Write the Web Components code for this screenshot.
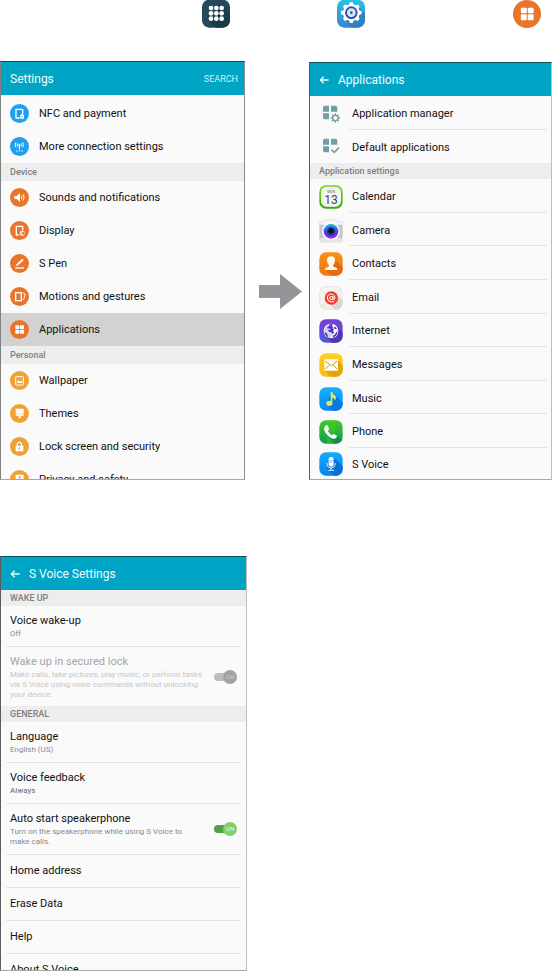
<!DOCTYPE html>
<html lang="en">
<head>
<meta charset="utf-8">
<meta name="viewport" content="width=device-width, initial-scale=1">
<title>S Voice settings</title>
<style>
  body {
    margin: 0;
    background: #fff;
    font-family: Roboto, "Liberation Sans", sans-serif;
    color: #111;
  }
  .path {
    display: grid;
    grid-template-columns: 202fr 135fr 176fr 39fr;
    margin-bottom: 33px;
  }
  .path ui-icon:first-child { grid-column: 2; }
  .steps {
    display: grid;
    grid-template-columns: 245fr 64px 243fr;
    align-items: end;
    margin-bottom: 76px;
  }
  .steps.single {
    grid-template-columns: 247fr 305fr;
    margin-bottom: 0;
  }
  .next {
    align-self: center;
    justify-self: end;
    padding: 41px 7px 0 0;
  }
  .first { --ratio: 245 / 419; --left: #808080; --right: #8c8c8c; }
  .second { --ratio: 243 / 418; }
  .third { --ratio: 247 / 415; }
</style>
</head>
<body>

<nav class="path" aria-label="Path">
  <ui-icon name="apps" size="28"></ui-icon>
  <ui-icon name="settings" size="28"></ui-icon>
  <ui-icon name="applications" size="28"></ui-icon>
</nav>

<main>
  <div class="steps">
    <phone-screen class="first">
      <screen-header>Settings<button-text slot="action">SEARCH</button-text></screen-header>
      <menu-list>
        <menu-item icon="nfc">NFC and payment</menu-item>
        <menu-item icon="connection">More connection settings</menu-item>
        <section-label>Device</section-label>
        <menu-item icon="sound">Sounds and notifications</menu-item>
        <menu-item icon="display">Display</menu-item>
        <menu-item icon="pen">S Pen</menu-item>
        <menu-item icon="motion">Motions and gestures</menu-item>
        <menu-item icon="applications" selected>Applications</menu-item>
        <section-label>Personal</section-label>
        <menu-item icon="wallpaper">Wallpaper</menu-item>
        <menu-item icon="themes">Themes</menu-item>
        <menu-item icon="lock">Lock screen and security</menu-item>
        <menu-item icon="privacy">Privacy and safety</menu-item>
      </menu-list>
    </phone-screen>

    <ui-icon class="next" name="next" size="43"></ui-icon>

    <phone-screen class="second">
      <screen-header back>Applications</screen-header>
      <app-item icon="manager" divider>Application manager</app-item>
      <app-item icon="defaults">Default applications</app-item>
      <section-label compact>Application settings</section-label>
      <app-item icon="calendar" divider>Calendar</app-item>
      <app-item icon="camera" divider>Camera</app-item>
      <app-item icon="contacts" divider>Contacts</app-item>
      <app-item icon="email" divider>Email</app-item>
      <app-item icon="internet" divider>Internet</app-item>
      <app-item icon="messages" divider>Messages</app-item>
      <app-item icon="music" divider>Music</app-item>
      <app-item icon="phone" divider>Phone</app-item>
      <app-item icon="voice">S Voice</app-item>
    </phone-screen>
  </div>

  <div class="steps single">
    <phone-screen class="third">
      <screen-header back>S Voice Settings</screen-header>
      <section-label compact>WAKE UP</section-label>
      <option-item divider>Voice wake-up<span slot="detail">Off</span></option-item>
      <option-item toggle disabled>Wake up in secured lock<span slot="detail">Make calls, take pictures, play music, or perform tasks<br>via S Voice using voice commands without unlocking<br>your device.</span></option-item>
      <section-label compact>GENERAL</section-label>
      <option-item divider>Language<span slot="detail">English (US)</span></option-item>
      <option-item divider dark>Voice feedback<span slot="detail">Always</span></option-item>
      <option-item divider toggle>Auto start speakerphone<span slot="detail">Turn on the speakerphone while using S Voice to<br>make calls.</span></option-item>
      <option-item divider plain>Home address</option-item>
      <option-item divider plain>Erase Data</option-item>
      <option-item divider plain>Help</option-item>
      <option-item plain>About S Voice</option-item>
    </phone-screen>
  </div>
</main>

<script>
const BLUE = '#1f9fee'
const ORANGE = '#e9752a'
const AMBER = '#eea236'

// round badges are drawn on a 57 unit grid
const badge = (color, body) => ({
  box: '0 0 57 57',
  body: `<circle cx="28.500" cy="28.500" r="28.500" fill="${color}"/>${body}`
})

// launcher icons are drawn on a 72 unit grid
const tile = (id, from, to, body) => ({
  box: '0 0 72 72',
  body: `
    <defs>
      <linearGradient id="${id}" x1="0" y1="0" x2="0" y2="1">
        <stop offset="0" stop-color="${from}"/><stop offset="1" stop-color="${to}"/>
      </linearGradient>
      <clipPath id="${id}-clip"><rect x="1" y="1" width="70" height="70" rx="20"/></clipPath>
    </defs>
    <g clip-path="url(#${id}-clip)"><rect width="72" height="72" fill="url(#${id})"/>${body}</g>`
})

const squares = `<g fill="#719fa9">
  <path d="M17 11h13v18H12V17q0-6 5-6zM36 11h13q6 0 6 6v12H36zM12 34h18v18H17q-5 0-5-6z"/></g>`

const ICONS = {
  apps: {
    box: '0 0 84 84',
    body: `<defs><clipPath id="a"><rect width="84" height="84" y="-1" rx="22"/></clipPath></defs>
      <g clip-path="url(#a)"><path fill="#24495a" d="M0-2h84v86H0z"/>
      <path fill="#1b3b48" d="M66 20l20 22v44H44L20 60z"/>
      <g fill="#fff">${[27, 43, 59].map(x => [24, 40, 56].map(y => `<circle cx="${x}" cy="${y}" r="7"/>`).join('')).join('')}</g></g>`
  },
  settings: {
    box: '0 0 84 84',
    body: `<defs><linearGradient id="s" x1="0" y1="0" x2="0" y2="1"><stop offset="0" stop-color="#25c3e6"/><stop offset="1" stop-color="#3f83cf"/></linearGradient>
      <clipPath id="c"><rect width="84" height="84" y="-1" rx="22"/></clipPath></defs>
      <g clip-path="url(#c)"><path fill="url(#s)" d="M0-2h84v86H0z"/>
      <path fill="#3077b8" opacity=".7" d="M65 21l20 20v45H48L24 60z"/>
      <g fill="#fff"><circle cx="43" cy="38" r="25"/>
      ${[0, 45, 90, 135, 180, 225, 270, 315].map(a => `<path transform="rotate(${a} 43 38)" d="M39 7h8l4 9H35z"/>`).join('')}</g>
      <circle cx="43" cy="38" r="16" fill="#e9f2fb" stroke="#2c55b2" stroke-width="6"/>
      <circle cx="43" cy="38" r="8" fill="none" stroke="#a9cbea" stroke-width="2"/><circle cx="43" cy="38" r="4" fill="#2c55b2"/></g>`
  },
  applications: badge(ORANGE, '<g fill="#fff"><rect x="16" y="16" width="12" height="11" rx="2"/><rect x="30" y="16" width="12" height="11" rx="2"/><rect x="16" y="29" width="12" height="12" rx="2"/><rect x="30" y="29" width="12" height="12" rx="2"/></g>'),
  nfc: badge(BLUE, '<path d="M29 42H18V16h20v14" fill="none" stroke="#fff" stroke-width="4" stroke-linejoin="round"/><path d="M32 33h10v11H31V33zM33 33v-2q3-4 6 0v2" fill="#fff"/><path d="M34 38h5" stroke="#1f9fee" stroke-width="2"/>'),
  connection: badge(BLUE, '<g fill="none" stroke="#fff" stroke-width="3"><path d="M28 27v11M18 16q-5 7 0 15M38 16q5 7 0 15M23 19q-3 4 0 9M33 19q3 4 0 9M18 42h4M26 42h5M35 42h4"/></g><circle cx="28" cy="24" r="3" fill="#fff"/>'),
  sound: badge(ORANGE, '<path d="M13 24h7l10-9v27l-10-9h-7z" fill="#fff"/><path d="M34 23q4 5 0 11M39 19q7 9 0 19" fill="none" stroke="#fff" stroke-width="3"/>'),
  display: badge(ORANGE, '<path d="M26 42h-7V16h19v12" fill="none" stroke="#fff" stroke-width="4"/><circle cx="37" cy="37" r="5" fill="none" stroke="#fff" stroke-width="4"/><path d="M37 28v18M28 37h18M31 31l12 12M43 31L31 43" stroke="#fff" stroke-width="2"/><circle cx="39" cy="37" r="4" fill="#e9752a"/>'),
  pen: badge(ORANGE, '<path d="M17 37l3-7 17-16 4 5-16 14z" fill="#fff"/><path d="M16 42h26" stroke="#fff" stroke-width="4"/>'),
  motion: badge(ORANGE, '<rect x="17" y="17" width="17" height="24" fill="none" stroke="#fff" stroke-width="4"/><path d="M38 17l7 4-3 14-4 4" fill="none" stroke="#fff" stroke-width="3"/>'),
  wallpaper: badge(AMBER, '<rect x="17" y="17" width="23" height="25" rx="2" fill="none" stroke="#fff" stroke-width="3"/><path d="M21 36v-3l5-5 4 4 3-3 4 4v3z" fill="#fff"/>'),
  themes: badge(AMBER, '<path d="M17 14h24v15H17zM17 31h24v4h-9v8h-6v-8h-9z" fill="#fff"/>'),
  lock: badge(AMBER, '<rect x="17" y="26" width="23" height="17" rx="2" fill="#fff"/><path d="M22 27v-6q6-11 13 0v6" fill="none" stroke="#fff" stroke-width="4"/><path d="M28 31v7" stroke="#eea236" stroke-width="4"/>'),
  privacy: badge(AMBER, '<rect x="17" y="14" width="24" height="29" rx="2" fill="#fff"/><path d="M29 18v9M29 30v4" stroke="#eea236" stroke-width="4"/>'),
  back: {
    box: '0 0 30 30',
    body: '<path d="M14 5L4 15l10 10M4 15h25" fill="none" stroke="#e6fbff" stroke-width="4"/>'
  },
  next: {
    box: '0 0 43 43',
    body: '<path d="M0 15h21V4l22 17.500L21 39V28H0z" fill="#939598"/>'
  },
  manager: {
    box: '0 0 72 72',
    body: `${squares}<circle cx="49" cy="48" r="15" fill="#fafafa"/><g fill="none" stroke="#719fa9" stroke-width="4"><circle cx="49" cy="48" r="8"/><path d="M49 40v-6M49 56v6M41 48h-6M57 48h6M43 42l-4-4M55 42l4-4M43 54l-4 4M55 54l4 4"/></g>`
  },
  defaults: {
    box: '0 0 72 72',
    body: `${squares}<path d="M37 44l9 8 14-14" fill="none" stroke="#719fa9" stroke-width="5"/>`
  },
  calendar: tile('cal', '#78d615', '#35a90c', '<rect x="6" y="5" width="60" height="60" rx="16" fill="#f4f5f2"/><path d="M21 12q15-3 31 0" stroke="#ddd" fill="none" stroke-width="2"/><text x="36" y="23" font-size="10" text-anchor="middle" fill="#666">MON</text><text x="36" y="57" font-size="36" text-anchor="middle" fill="#444">13</text>'),
  camera: {
    box: '0 0 72 72',
    body: `<defs><linearGradient id="lens" x1="0" y1="0" x2="0" y2="1"><stop offset="0" stop-color="#16b8e0"/><stop offset=".6" stop-color="#5c32e8"/><stop offset="1" stop-color="#a421ef"/></linearGradient></defs>
      <path d="M2 8h14l4-5h32l4 5h14v57q0 4-4 4H6q-4 0-4-4z" fill="#f7f7f9" stroke="#d4d5da" stroke-width="2"/>
      <path d="M2 17h68v40H2z" fill="#c5c4d3"/><path d="M3 58h66v7q0 3-3 3H6q-3 0-3-3z" fill="#e4e3e9"/>
      <circle cx="36" cy="37" r="27" fill="#fafafc"/><circle cx="36" cy="37" r="22" fill="url(#lens)"/>
      <circle cx="36" cy="37" r="13" fill="#243b9c"/><circle cx="36" cy="36" r="8" fill="#07142f"/>`
  },
  contacts: tile('con', '#f99116', '#f17716', '<path d="M45 21l27 25v26H36L20 53z" fill="#e76a12"/><path d="M36 13q13 0 12 14-1 9-6 13-1 4 4 5 9 2 10 9H17q1-7 10-9 4-2 3-5-5-5-6-13-1-14 12-14z" fill="#fffaf1"/>'),
  email: tile('eml', '#f7f6f5', '#f1efea', '<path d="M52 25l20 20v27H50L30 53z" fill="#dad8d2"/><path d="M5 9l25 25M67 9L43 34M5 67l25-25" stroke="#dddbd7" stroke-width="2"/><rect x="2" y="2" width="68" height="68" rx="19" fill="none" stroke="#d7d5d2" stroke-width="2"/><circle cx="37" cy="36" r="20" fill="#f13d2b"/><g fill="none" stroke="#fff" stroke-width="3"><circle cx="37" cy="36" r="5"/><path d="M42 30v8q1 4 5 2 3-14-9-16-13 0-13 12 1 12 13 12l7-2"/></g>'),
  internet: tile('net', '#783cd5', '#4b5de0', '<path d="M52 21l20 20v31H38L21 53z" fill="#5435b4"/><circle cx="36" cy="36" r="22" fill="#fff"/><path d="M33 16l5 2-1 5 7 3-3 5-5-1-4 6-7 1 3 4 7 0 6 5-5 7-2 5-6-1-3-8-6-5-3-8 1-4q3-11 10-14z" fill="#5435b4" opacity=".25"/><path d="M30 17q7-3 12-1l-4 4 5 4-3 4 5 2-3 6 4 5-6 4-3-5-4 0-6-3 1-3 6-2-1-4-6 1-3-4 7-3zM16 39l7 4 3 6 1 6Q18 51 16 39zM41 50l6-3 5-7 4-3q-1 14-14 19zM48 22l6 7-6 2-3-4z" fill="#5134bd"/>'),
  messages: tile('msg', '#ffd022', '#fcb80d', '<path d="M55 21l17 17v34H35L17 51z" fill="#e6a40c"/><rect x="16" y="19" width="41" height="34" rx="2" fill="#fffdf2"/><path d="M18 24l19 14 18-14M19 48l12-12M54 48L43 36" fill="none" stroke="#c99b2c" stroke-width="3"/>'),
  music: tile('mus', '#18b0ff', '#0889f6', '<path d="M40 15l32 34v23H41L22 51z" fill="#0a78df"/><ellipse cx="31" cy="49" rx="9" ry="8" fill="#d6f052"/><path d="M35 50V15h5q1 7 8 10 5 5 1 16-1-7-9-9v18z" fill="#d6f052"/>'),
  phone: tile('pho', '#48c528', '#0b9b57', '<path d="M24 0h24v72H24z" fill="#43d51c" opacity=".4"/><path d="M55 49l17 14v9H45L22 42z" fill="#088348" opacity=".6"/><path d="M18 18q6-6 9 0l3 8q0 4-4 6 5 10 14 14 3-5 7-3l6 4q3 3-2 7-10 7-24-7Q9 30 18 18z" fill="#fff"/>'),
  voice: tile('voi', '#16aaff', '#0a80ec', '<path d="M46 19l26 25v28H47L23 49z" fill="#0a70d3"/><rect x="29" y="15" width="15" height="29" rx="7" fill="#fff"/><path d="M29 25h15M29 30h15" stroke="#6aa6df" stroke-width="2"/><path d="M24 33v4q2 11 12 11t13-11v-4M36 47v7M28 55h17" fill="none" stroke="#d9eeff" stroke-width="3"/>')
}

class UiIcon extends HTMLElement {
  constructor() {
    super()
    this.attachShadow({ mode: 'open' })
  }

  connectedCallback() {
    const icon = ICONS[this.getAttribute('name')]
    const size = this.getAttribute('size')

    this.shadowRoot.innerHTML = `
      <style>
        :host { display: block; flex: none; }
        svg { display: block; }
      </style>
      <svg width="${size}" height="${size}" viewBox="${icon.box}" aria-hidden="true">${icon.body}</svg>
    `
  }
}

class PhoneScreen extends HTMLElement {
  constructor() {
    super()
    this.attachShadow({ mode: 'open' })
    this.shadowRoot.innerHTML = `
      <style>
        :host {
          display: flex;
          flex-direction: column;
          box-sizing: border-box;
          min-width: 0;
          min-height: 0;
          aspect-ratio: var(--ratio);
          overflow: hidden;
          background: #fafafa;
          border: 1px solid;
          border-color: #0b4f5c var(--right, #bdbdbd) #a8a8a8 var(--left, #5c5c5c);
        }
      </style>
      <slot></slot>
    `
  }
}

class ScreenHeader extends HTMLElement {
  constructor() {
    super()
    this.attachShadow({ mode: 'open' })
  }

  connectedCallback() {
    const back = this.hasAttribute('back')
      ? '<button aria-label="Back"><ui-icon name="back" size="10"></ui-icon></button>'
      : ''

    this.shadowRoot.innerHTML = `
      <style>
        :host {
          display: flex;
          flex: none;
          align-items: center;
          gap: 9px;
          height: 33px;
          padding: 0 6px 0 9px;
          background: #00a5c6;
          color: #f0fcff;
        }
        h2 { flex: 1; margin: 0; font-size: 12px; font-weight: 400; line-height: 16px; }
        button { padding: 0; border: 0; background: none; }
      </style>
      ${back}<h2><slot></slot></h2><slot name="action"></slot>
    `
  }
}

class ButtonText extends HTMLElement {
  constructor() {
    super()
    this.attachShadow({ mode: 'open' })
    this.shadowRoot.innerHTML = `
      <style>
        :host { display: block; }
        button { display: block; padding: 0; border: 0; background: none; color: #c9f3fb; font: 9px/16px Roboto, sans-serif; }
      </style>
      <button><slot></slot></button>
    `
  }
}

class MenuList extends HTMLElement {
  constructor() {
    super()
    this.attachShadow({ mode: 'open' })
    this.shadowRoot.innerHTML = `
      <style>
        :host { display: block; padding-top: 2px; }
      </style>
      <slot></slot>
    `
  }
}

class SectionLabel extends HTMLElement {
  constructor() {
    super()
    this.attachShadow({ mode: 'open' })
    this.shadowRoot.innerHTML = `
      <style>
        :host { display: block; flex: none; padding: 0 9px; background: #ededed; }
        h3 { margin: 0; font-size: 9px; font-weight: 500; line-height: 18px; color: #7f7f7f; }
        :host([compact]) h3 { line-height: 16px; }
      </style>
      <h3><slot></slot></h3>
    `
  }
}

class MenuItem extends HTMLElement {
  constructor() {
    super()
    this.attachShadow({ mode: 'open' })
  }

  connectedCallback() {
    this.shadowRoot.innerHTML = `
      <style>
        :host { display: block; }
        :host([selected]) { background: #d2d2d2; }
        a {
          display: flex;
          align-items: center;
          gap: 10px;
          height: 33px;
          padding: 0 9px;
          color: inherit;
          font-size: 11px;
          text-decoration: none;
          white-space: nowrap;
        }
      </style>
      <a href="#"><ui-icon name="${this.getAttribute('icon')}" size="19"></ui-icon><slot></slot></a>
    `
  }
}

class AppItem extends HTMLElement {
  constructor() {
    super()
    this.attachShadow({ mode: 'open' })
  }

  connectedCallback() {
    this.shadowRoot.innerHTML = `
      <style>
        :host { display: flex; flex: 1 0 33px; }
        :host(:last-child) { flex: 0 0 31px; }
        a {
          display: flex;
          flex: 1;
          align-items: center;
          gap: 6px;
          padding: 2px 4px 0 9px;
          color: inherit;
          font-size: 11px;
          text-decoration: none;
        }
        span {
          display: flex;
          flex: 1;
          align-items: center;
          align-self: stretch;
          padding-left: 3px;
        }
        :host([divider]) span { border-bottom: 1px solid #e4e4e4; }
      </style>
      <a href="#"><ui-icon name="${this.getAttribute('icon')}" size="24"></ui-icon><span><slot></slot></span></a>
    `
  }
}

class OptionItem extends HTMLElement {
  constructor() {
    super()
    this.attachShadow({ mode: 'open' })
  }

  connectedCallback() {
    const toggle = this.hasAttribute('toggle')
    const tag = toggle ? 'label' : 'a'
    const disabled = this.hasAttribute('disabled') ? 'disabled' : ''

    this.shadowRoot.innerHTML = `
      <style>
        :host { display: block; flex: none; padding: 0 5px; }
        .row {
          display: flex;
          align-items: center;
          justify-content: space-between;
          padding: 7px 4px 6px;
          color: inherit;
          text-decoration: none;
          white-space: nowrap;
        }
        :host([divider]) .row { padding-bottom: 7px; border-bottom: 1px solid #e4e4e4; }
        :host([plain]) .row { padding: 8px 4px; }
        .title { font-size: 11px; line-height: 16px; }
        .detail { font-size: 8px; line-height: 10px; color: #8a8a8a; }
        :host([dark]) .detail { color: #666; }
        :host([disabled]) .title { color: #a6a6a6; }
        :host([disabled]) .detail { color: #c6c6c6; }
        .switch { display: grid; align-items: center; width: 23px; }
        .switch > * { grid-area: 1 / 1; }
        input {
          appearance: none;
          width: 20px;
          height: 8px;
          margin: 0;
          border-radius: 4px;
          background: #55a043;
        }
        .thumb {
          justify-self: end;
          width: 14px;
          border-radius: 7px;
          background: #82cf6c;
          color: #e4f8dc;
          font-size: 6px;
          line-height: 14px;
          text-align: center;
        }
        input:disabled { background: #bcbcbc; }
        input:disabled + .thumb { background: #a2a2a2; color: #c8c8c8; }
      </style>
      <${tag} class="row" ${toggle ? '' : 'href="#"'}>
        <div>
          <div class="title"><slot></slot></div>
          <div class="detail"><slot name="detail"></slot></div>
        </div>
        ${toggle ? `<div class="switch"><input type="checkbox" role="switch" checked ${disabled}><span class="thumb">ON</span></div>` : ''}
      </${tag}>
    `
  }
}

customElements.define('ui-icon', UiIcon)
customElements.define('phone-screen', PhoneScreen)
customElements.define('screen-header', ScreenHeader)
customElements.define('button-text', ButtonText)
customElements.define('menu-list', MenuList)
customElements.define('section-label', SectionLabel)
customElements.define('menu-item', MenuItem)
customElements.define('app-item', AppItem)
customElements.define('option-item', OptionItem)
</script>
</body>
</html>
